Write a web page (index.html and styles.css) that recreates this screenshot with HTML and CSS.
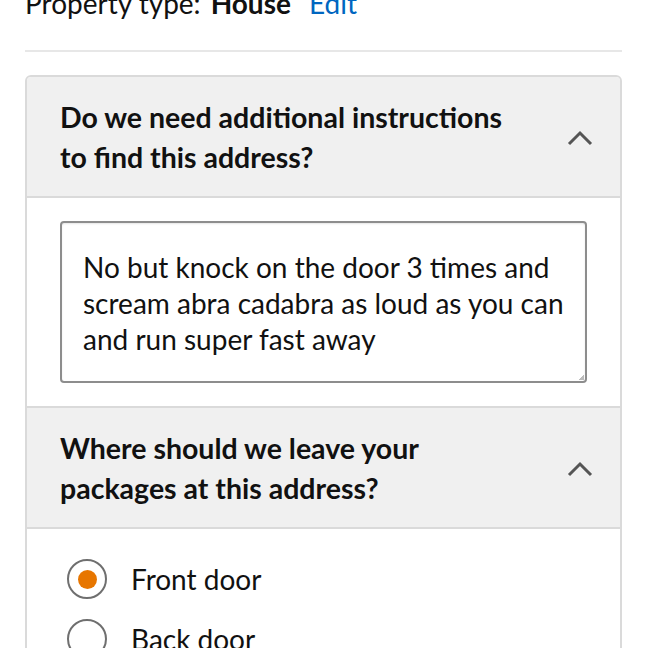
FILE: index.html
```html
<!DOCTYPE html>
<html>
<head>
<meta charset="utf-8">
<link rel="stylesheet" href="styles.css">
</head>
<body>
<div class="page">
  <div class="prop-row">
    <span class="prop-label">Property type:</span>
    <span class="prop-value">House</span>
    <a class="prop-edit">Edit</a>
  </div>
  <hr class="divider">
  <div class="card">
    <div class="section-head">
      <h2 class="section-title">Do we need additional instructions<br>to find this address?</h2>
      <svg class="chevron" width="28" height="16" viewBox="0 0 28 16"><path d="M3 14 L14 3 L25 14" fill="none" stroke="#555" stroke-width="3"/></svg>
    </div>
    <div class="section-body">
      <div class="textarea">No but knock on the door 3 times and scream abra cadabra as loud as you can and run super fast away<span class="grip"></span></div>
    </div>
    <div class="section-head">
      <h2 class="section-title">Where should we leave your<br>packages at this address?</h2>
      <svg class="chevron" width="28" height="16" viewBox="0 0 28 16"><path d="M3 14 L14 3 L25 14" fill="none" stroke="#555" stroke-width="3"/></svg>
    </div>
    <div class="section-body options">
      <label class="option"><span class="radio checked"></span><span class="option-label">Front door</span></label>
      <label class="option"><span class="radio"></span><span class="option-label">Back door</span></label>
    </div>
  </div>
</div>
</body>
</html>
```

FILE: styles.css
```css
html, body {
  margin: 0;
  padding: 0;
  background: #fff;
}
body {
  font-family: Lato, "Open Sans", sans-serif;
  color: #111;
  overflow: hidden;
  height: 648px;
}
.page {
  padding: 0 26px 0 25px;
  margin-top: -15px;
}
.prop-row {
  font-size: 28px;
  line-height: 36px;
  display: flex;
  gap: 8px;
  color: #111;
}
.prop-value {
  font-weight: 700;
  margin-left: 2px;
}
.prop-edit {
  color: #0066c0;
  margin-left: 10px;
}
.divider {
  border: 0;
  border-top: 2px solid #e7e7e7;
  margin: 29px 0 23px;
}
.card {
  border: 2px solid #dadada;
  border-radius: 6px;
  overflow: hidden;
}
.section-head {
  background: #f0f0f0;
  display: flex;
  align-items: center;
  justify-content: space-between;
  padding: 20px 26px 19px 33px;
  border-bottom: 2px solid #dadada;
}
.section-title {
  margin: 0;
  font-size: 28.5px;
  line-height: 40px;
  font-weight: 700;
  color: #111;
}
.chevron {
  margin-top: 2px;
}
.section-body {
  background: #fff;
  padding: 23px 33px 23px 33px;
  border-bottom: 2px solid #dadada;
}
.textarea {
  position: relative;
  border: 2px solid #8d8d8d;
  border-radius: 4px;
  padding: 26px 8px 24px 21px;
  font-size: 28px;
  line-height: 36px;
  color: #111;
  height: 108px;
  box-shadow: inset 0 1px 2px rgba(0,0,0,0.1);
}
.grip {
  position: absolute;
  right: 1px;
  bottom: 1px;
  width: 5px;
  height: 5px;
  background: linear-gradient(135deg, transparent 50%, #bbb 50%);
}
.options {
  border-bottom: 0;
  padding: 30px 33px 80px 40px;
  display: flex;
  flex-direction: column;
  gap: 20px;
}
.option {
  display: flex;
  align-items: center;
  gap: 24px;
}
.radio {
  width: 40px;
  height: 40px;
  border: 2px solid #6f6f6f;
  border-radius: 50%;
  box-sizing: border-box;
  display: flex;
  align-items: center;
  justify-content: center;
}
.radio.checked::after {
  content: "";
  width: 19px;
  height: 19px;
  border-radius: 50%;
  background: #e77600;
}
.option-label {
  font-size: 28px;
  line-height: 40px;
}
```
